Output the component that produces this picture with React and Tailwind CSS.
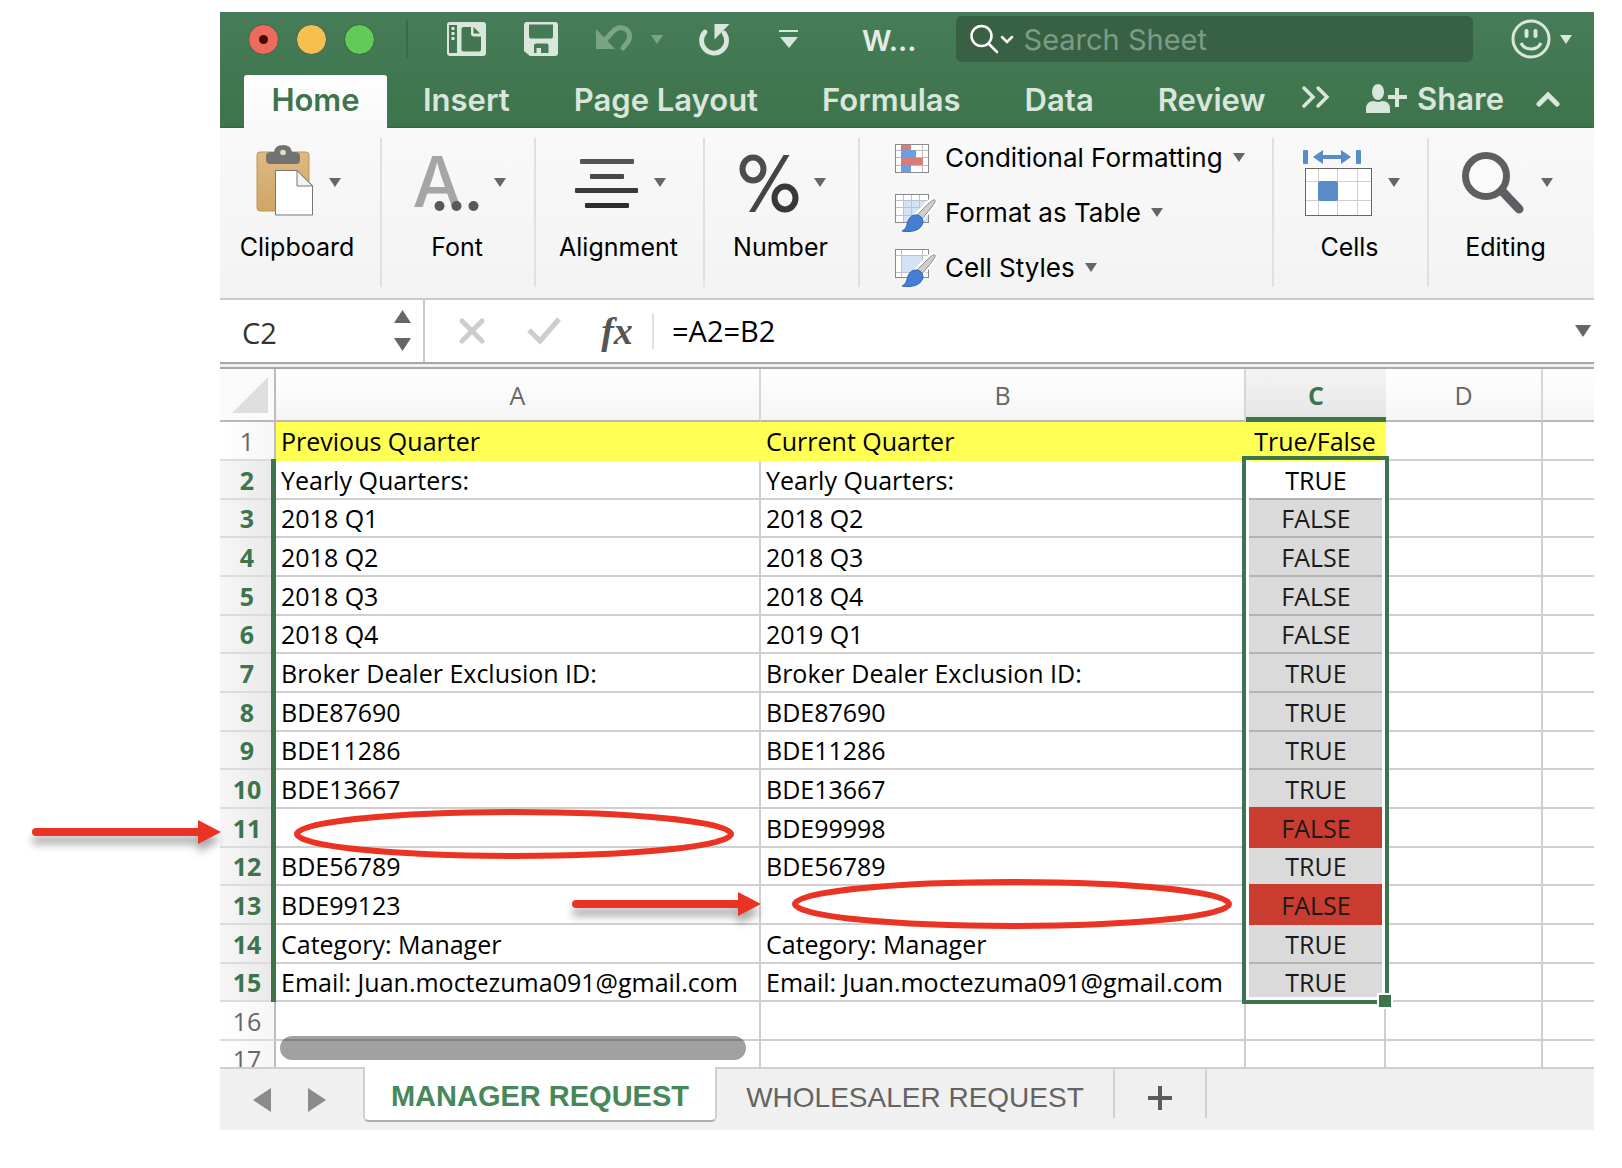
import React from "react";

const TRI = "shrink-0 fill-current";

function Down({ className = "w-3 h-[9px]" }) {
  return (
    <svg viewBox="0 0 12 9" className={`${TRI} ${className}`} aria-hidden="true">
      <path d="M0 0h12L6 9z" />
    </svg>
  );
}

function TemplateIcon() {
  return (
    <svg viewBox="0 0 39 34" className="w-[39px] h-[34px]" aria-hidden="true">
      <rect x="0" y="0" width="39" height="34" rx="3" fill="#d9e6dc" />
      <path d="M2 3h8v28H2z" fill="#42774f" />
      <path d="M16.500 5H24v6.500q0 3 3 3h7V27.500q0 2-2 2H16.500q-2 0-2-2V7q0-2 2-2z" fill="#42774f" />
      <path d="M26.500 5v6.500h6.500z" fill="#42774f" />
      <path d="M4.500 5h3v3h-3zM4.500 10h3v3h-3zM4.500 15h3v3h-3z" fill="#d9e6dc" />
    </svg>
  );
}

function SaveIcon() {
  return (
    <svg viewBox="0 0 34 34" className="w-[34px] h-[34px]" aria-hidden="true">
      <path fillRule="evenodd" fill="#d9e6dc" d="M3 0h28q3 0 3 3v28q0 3-3 3H6l-6-5V3q0-3 3-3zM5 2.500v12q0 2 2 2h20q2 0 2-2v-12zM10 23.500v7.500h2.500v-5H17v5h7.500v-7.500q0-2-2-2H12q-2 0-2 2z" />
    </svg>
  );
}

function UndoIcon() {
  return (
    <svg viewBox="0 0 38 28" className="w-[38px] h-7" aria-hidden="true">
      <path d="M1 4v20h19z" fill="#7ba386" />
      <path d="M10 15L17 7.500C24-1 35 3 34.500 12c0 5-4 7-6.500 11" fill="none" stroke="#7ba386" strokeWidth="5" strokeLinecap="round" />
    </svg>
  );
}

function RedoIcon() {
  return (
    <svg viewBox="0 0 32 33" className="w-8 h-[33px]" aria-hidden="true">
      <path d="M6 9A12.500 12.500 0 1 0 25 10" fill="none" stroke="#d9e6dc" strokeWidth="4.800" strokeLinecap="round" />
      <path d="M15.500 1h15L15.500 16.500z" fill="#d9e6dc" />
    </svg>
  );
}

function ClipboardIcon() {
  return (
    <svg viewBox="0 0 58 72" className="w-[58px] h-[72px]" aria-hidden="true">
      <defs>
        <linearGradient id="board" x1="0" y1="0" x2="0" y2="1">
          <stop offset="0" stopColor="#dfba82" />
          <stop offset="1" stopColor="#d0a566" />
        </linearGradient>
      </defs>
      <rect x="1" y="8" width="52" height="59" rx="3" fill="url(#board)" stroke="#bf9555" />
      <path d="M10 12q0-4 5-4h3q1-7 9-7t9 7h3q5 0 5 4v4q0 4-4 4H14q-4 0-4-4z" fill="#727272" />
      <circle cx="27" cy="8.500" r="2.800" fill="#e9dcc4" />
      <path d="M19.500 26.500H41l15.500 15v29.500h-37z" fill="#fff" stroke="#777" />
      <path d="M41 26.500v15.500h15.500z" fill="#f3f3f3" stroke="#777" />
    </svg>
  );
}

function FontIcon() {
  return (
    <span className="relative block w-[66px] h-[72px] text-left font-medium text-[70px] leading-[75px] text-[#a5a5a5]" aria-hidden="true">
      A
      <svg viewBox="0 0 46 12" className="absolute left-[21px] top-[56px] w-[46px] h-3">
        <circle cx="5.500" cy="6" r="5" fill="#58585c" />
        <circle cx="22.500" cy="6" r="5" fill="#58585c" />
        <circle cx="39.500" cy="6" r="5" fill="#58585c" />
      </svg>
    </span>
  );
}

function AlignIcon() {
  return (
    <svg viewBox="0 0 64 72" className="w-16 h-[72px]" aria-hidden="true">
      <rect x="5" y="15" width="54" height="5" rx="1" fill="#555" />
      <rect x="15" y="30" width="34" height="5" rx="1" fill="#484848" />
      <rect x="0" y="44" width="63" height="5" rx="1" fill="#3a3a3a" />
      <rect x="10" y="59" width="44" height="5" rx="1" fill="#2e2e2e" />
    </svg>
  );
}

function PercentIcon() {
  return (
    <svg viewBox="0 0 60 72" className="w-[60px] h-[72px]" aria-hidden="true">
      <ellipse cx="14" cy="25" rx="10.500" ry="11.500" fill="none" stroke="#4d4d4d" strokeWidth="6" />
      <ellipse cx="46" cy="54" rx="10.500" ry="11.500" fill="none" stroke="#383838" strokeWidth="6" />
      <path d="M44.500 11h6L16 68h-6z" fill="#444" />
    </svg>
  );
}

function Brush() {
  return (
    <g>
      <path d="M40 5c2 2 0 5-3 9L27 26l-7-5L32 9c3-3 6-5 8-4z" fill="#c9c9c9" stroke="#fff" strokeWidth="3" />
      <path d="M40 6c1 1-1 4-4 8l-9 11-5-4L33 10c3-3 6-5 7-4z" fill="#cfcfcf" stroke="#8c8c8c" strokeWidth="1" />
      <path d="M21 21c4 0 7 3 7 7-1 7-9 11-21 9 6-3 4-7 7-12 2-3 4-4 7-4z" fill="#447fd4" stroke="#2f62b4" strokeWidth="1" />
    </g>
  );
}

function CondIcon() {
  return (
    <svg viewBox="0 0 42 38" className="w-[42px] h-[38px]" aria-hidden="true">
      <rect x="0.500" y="5.500" width="33" height="28" fill="#fff" stroke="#8a8a8a" />
      <path d="M6.500 6v27M27.500 6v27M1 11.500h32M1 18.500h32M1 26.500h32" stroke="#bbb" fill="none" />
      <rect x="6" y="6" width="10" height="5" fill="#d97b7b" />
      <rect x="6" y="11" width="15" height="8" fill="#6b9fe4" />
      <rect x="6" y="19" width="22" height="7" fill="#d97b7b" />
      <rect x="6" y="26" width="10" height="7" fill="#6b9fe4" />
    </svg>
  );
}

function TableFormatIcon() {
  return (
    <svg viewBox="0 0 42 38" className="w-[42px] h-[38px]" aria-hidden="true">
      <rect x="0.500" y="0.500" width="33" height="28" fill="#fff" stroke="#8a8a8a" />
      <rect x="9" y="7" width="24" height="21" fill="#d3e2f5" />
      <path d="M8.500 1v27M16.500 1v27M24.500 1v27M1 6.500h32M1 13.500h32M1 21.500h32" stroke="#bcc3cc" fill="none" />
      <Brush />
    </svg>
  );
}

function CellStyleIcon() {
  return (
    <svg viewBox="0 0 42 38" className="w-[42px] h-[38px]" aria-hidden="true">
      <rect x="0.500" y="0.500" width="33" height="28" fill="#fff" stroke="#8a8a8a" />
      <rect x="7" y="7" width="21" height="16" fill="#d3e2f5" />
      <path d="M6.500 1v27M27.500 1v27M1 6.500h32M1 23.500h32" stroke="#bcc3cc" fill="none" />
      <Brush />
    </svg>
  );
}

function CellsIcon() {
  return (
    <svg viewBox="0 0 70 72" className="w-[70px] h-[72px]" aria-hidden="true">
      <rect x="0" y="6" width="5" height="14" rx="1" fill="#588bca" />
      <rect x="53" y="6" width="5" height="14" rx="1" fill="#588bca" />
      <path d="M10 13l10-7v5h18V6l10 7-10 7v-5H20v5z" fill="#588bca" />
      <rect x="2.500" y="24.500" width="66" height="47" fill="#fff" stroke="#666" />
      <path d="M15.500 25v46M34.500 25v46M54.500 25v46M3 37.500h65M3 56.500h65" stroke="#cfcfcf" fill="none" />
      <rect x="15" y="37" width="20" height="20" rx="2" fill="#588bca" />
    </svg>
  );
}

function MagnifyIcon() {
  return (
    <svg viewBox="0 0 64 72" className="w-16 h-[72px]" aria-hidden="true">
      <path d="M40 47l17 18" stroke="#5f5f63" strokeWidth="9" strokeLinecap="round" />
      <circle cx="24" cy="32" r="20.500" fill="#fbfbfb" stroke="#5f5f63" strokeWidth="7" />
    </svg>
  );
}

function Group({ label, icon, className }) {
  return (
    <div className={`relative shrink-0 flex flex-col items-center pt-4 after:content-[''] after:absolute after:right-0 after:top-[10px] after:h-[149px] after:w-[2px] after:bg-[#e0e0e0] last:after:hidden ${className}`}>
      <button type="button" className="flex flex-col items-center gap-[15px]">
        <span className="flex items-center gap-[15px] pl-1 text-[#666]">
          {icon}
          <Down className="w-3 h-[9px] mt-1" />
        </span>
        <span className="text-[25px] leading-8 text-black">{label}</span>
      </button>
    </div>
  );
}

function StyleButton({ icon, label }) {
  return (
    <button type="button" className="flex items-center h-[55px] text-[#666]">
      {icon}
      <span className="ml-2 mr-[10px] text-[26px] leading-8 text-black">{label}</span>
      <Down />
    </button>
  );
}

const ROWS = [
  ["Previous Quarter", "Current Quarter", "True/False"],
  ["Yearly Quarters:", "Yearly Quarters:", "TRUE"],
  ["2018 Q1", "2018 Q2", "FALSE"],
  ["2018 Q2", "2018 Q3", "FALSE"],
  ["2018 Q3", "2018 Q4", "FALSE"],
  ["2018 Q4", "2019 Q1", "FALSE"],
  ["Broker Dealer Exclusion ID:", "Broker Dealer Exclusion ID:", "TRUE"],
  ["BDE87690", "BDE87690", "TRUE"],
  ["BDE11286", "BDE11286", "TRUE"],
  ["BDE13667", "BDE13667", "TRUE"],
  ["", "BDE99998", "FALSE"],
  ["BDE56789", "BDE56789", "TRUE"],
  ["BDE99123", "", "FALSE"],
  ["Category: Manager", "Category: Manager", "TRUE"],
  ["Email: Juan.moctezuma091@gmail.com", "Email: Juan.moctezuma091@gmail.com", "TRUE"],
  ["", "", ""],
];

const GRID = "border-r-2 border-b-2 border-[#cfcfcf]";
const isRed = (n) => n === 11 || n === 13;

function resultClass(n) {
  if (n === 1) return "bg-[#ffff54] border-r-2 border-b-2 border-[#ffff54]";
  if (n === 16) return GRID;
  if (n === 2) return "relative border-b-2 border-b-[#b3b3b3]";
  if (isRed(n)) return "border-b-2 bg-[#ca3c30] border-b-[#ca3c30] text-[#1a1a1a]";
  if (isRed(n + 1)) return "border-b-2 bg-[#dadada] border-b-[#ca3c30] text-[#1a1a1a]";
  return "border-b-2 bg-[#dadada] border-b-[#b3b3b3] text-[#1a1a1a]";
}

function Row({ n, cells }) {
  const picked = n > 1 && n < 16;
  const text = `pl-[5px] text-left whitespace-nowrap ${n === 1 ? "bg-[#ffff54] border-r-2 border-b-2 border-[#ffff54]" : GRID}`;
  return (
    <tr className="h-[39px] [&:nth-child(3n)]:h-[38px]">
      <th
        scope="row"
        className={
          picked
            ? "relative border-b-2 border-b-[#dcdcdc] bg-linear-to-r from-[#f7f7f7] to-[#e8e8e8] pr-[2px] font-bold text-[#3d744c] after:content-[''] after:absolute after:right-0 after:-top-[2px] after:-bottom-[2px] after:w-[5px] after:bg-[#3d744c]"
            : "border-r-2 border-b-2 border-r-[#bdbdbd] border-b-[#dcdcdc] bg-linear-to-r from-white to-[#f6f6f6] font-normal text-[#666]"
        }
      >
        {n}
      </th>
      <td className={text}>{cells[0]}</td>
      <td className={text}>{cells[1]}</td>
      <td className={`text-center ${resultClass(n)}`}>
        {cells[2]}
        {n === 2 && (
          <span className="absolute z-10 -left-1 -top-[5px] w-[147px] h-[548px] border-4 border-[#3d744c] pointer-events-none">
            <span className="absolute inset-0 border-x-[3px] border-b-[3px] border-white" />
            <span className="absolute -right-[8px] -bottom-[9px] w-4 h-4 border-2 border-white bg-[#3d744c]" />
          </span>
        )}
      </td>
      <td className={GRID} />
      <td className="border-b-2 border-[#cfcfcf]" />
    </tr>
  );
}

function ColHead({ children, last }) {
  return (
    <th scope="col" className={`border-b-2 border-b-[#b8b8b8] bg-linear-to-b from-white to-[#f5f5f5] font-normal text-[#666] ${last ? "" : "border-r-2 border-r-[#d6d6d6]"}`}>
      {children}
    </th>
  );
}

function Arrow({ className }) {
  return (
    <svg viewBox="0 0 192 50" className={`absolute w-[192px] h-[50px] overflow-visible drop-shadow-[0_8px_4px_rgba(0,0,0,0.35)] pointer-events-none ${className}`} aria-hidden="true">
      <path d="M4 13h164" stroke="#ea3323" strokeWidth="8" strokeLinecap="round" />
      <path d="M166 1l23 12-23 12z" fill="#ea3323" />
    </svg>
  );
}

function Ring({ className }) {
  return (
    <svg viewBox="0 0 440 50" className={`absolute w-[440px] h-[50px] pointer-events-none ${className}`} aria-hidden="true">
      <ellipse cx="220" cy="25" rx="217" ry="22" fill="none" stroke="#ea3323" strokeWidth="6" />
    </svg>
  );
}

const TABS = [
  ["Insert", "ml-9"],
  ["Page Layout", "ml-16"],
  ["Formulas", "ml-16"],
  ["Data", "ml-16"],
  ["Review", "ml-16"],
];

export default function App() {
  return (
    <div className="relative bg-white pt-3 pl-[220px] pr-7 pb-9 font-['Inter',sans-serif] text-black">
      <main className="flex flex-col overflow-hidden">
        <header className="bg-linear-to-b from-[#467c57] to-[#3d744b] text-[#d9e6dc]">
          <div className="flex items-center h-[63px] pb-[9px]">
            <div className="flex gap-[17px] ml-7">
              <button type="button" aria-label="Close" className="w-[31px] h-[31px] rounded-full bg-[#ed6a5f] border border-[#45604a] flex items-center justify-center">
                <span className="w-[9px] h-[9px] rounded-full bg-[#460804]" />
              </button>
              <button type="button" aria-label="Minimize" className="w-[31px] h-[31px] rounded-full bg-[#f5c04f] border border-[#45604a]" />
              <button type="button" aria-label="Zoom" className="w-[31px] h-[31px] rounded-full bg-[#62ca56] border border-[#37653a]" />
            </div>
            <span className="ml-[31px] w-[2px] h-[38px] bg-[#3a6b48]" />
            <button type="button" aria-label="New from template" className="ml-[39px]"><TemplateIcon /></button>
            <button type="button" aria-label="Save" className="ml-[38px]"><SaveIcon /></button>
            <button type="button" aria-label="Undo" className="ml-[37px]"><UndoIcon /></button>
            <button type="button" aria-label="Undo history" className="ml-[18px] text-[#7ba386]"><Down /></button>
            <button type="button" aria-label="Redo" className="ml-[36px]"><RedoIcon /></button>
            <button type="button" aria-label="Customize toolbar" className="ml-[48px]">
              <svg viewBox="0 0 20 18" className="w-5 h-[18px] fill-current"><path d="M0 0h19v2H0zM1 7h18l-9 11z" /></svg>
            </button>
            <span className="ml-[63px] pt-1 text-[29px] leading-8 font-semibold text-[#e3ede5]">W...</span>
            <label className="ml-[39px] flex-1 min-w-0 flex items-center h-[46px] rounded-md bg-[#386144] pl-[14px]">
              <svg viewBox="0 0 44 30" className="shrink-0 w-11 h-[30px]" fill="none" stroke="#fff" strokeWidth="2.500" strokeLinecap="round" aria-hidden="true">
                <circle cx="11.500" cy="12" r="10" />
                <path d="M19 20l8 8M32 13l5 5 5-5" />
              </svg>
              <input type="text" aria-label="Search Sheet" placeholder="Search Sheet" className="ml-[10px] pt-[2px] flex-1 min-w-0 bg-transparent text-[29px] leading-9 outline-none placeholder:text-[#7d9c86]" />
            </label>
            <button type="button" aria-label="Feedback" className="ml-[38px] mr-[22px] flex items-center gap-[9px]">
              <svg viewBox="0 0 40 40" className="w-10 h-10" fill="none" stroke="#d9e6dc" strokeWidth="3">
                <circle cx="20" cy="20" r="18" />
                <path d="M10 24q3 6 10 6t10-6" />
                <path d="M15.500 12v5M24.500 12v5" strokeWidth="4" strokeLinecap="round" />
              </svg>
              <Down />
            </button>
          </div>
          <nav className="flex h-[53px] border-b border-[#356642] text-[31px] leading-[50px] font-semibold">
            <button type="button" className="ml-6 -mb-px w-[143px] rounded-t-[3px] bg-linear-to-b from-white to-[#f8f8f8] text-[#3d744c] pb-1">Home</button>
            {TABS.map(([t, m]) => (
              <button type="button" key={t} className={`whitespace-nowrap pb-1 ${m}`}>{t}</button>
            ))}
            <button type="button" aria-label="More tabs" className="ml-[36px] pb-2">
              <svg viewBox="0 0 30 24" className="w-[30px] h-6" fill="none" stroke="currentColor" strokeWidth="3.500" strokeLinecap="round"><path d="M3 3l9 9-9 9M17 3l9 9-9 9" /></svg>
            </button>
            <button type="button" className="ml-auto flex items-center gap-[9px] pb-1">
              <svg viewBox="0 0 42 30" className="w-[42px] h-[30px] fill-current" aria-hidden="true">
                <ellipse cx="12" cy="8" rx="6" ry="8" />
                <path d="M0 29V25q0-8 8-8 4 2 8 0 8 0 8 8v4zM29 4h4v7h8v4h-8v8h-4v-8h-7v-4h7z" />
              </svg>
              Share
            </button>
            <button type="button" aria-label="Collapse ribbon" className="ml-[31px] mr-[33px] pb-1">
              <svg viewBox="0 0 26 16" className="w-[26px] h-4" fill="none" stroke="currentColor" strokeWidth="5" strokeLinecap="round"><path d="M4 13l9-9 9 9" /></svg>
            </button>
          </nav>
        </header>

        <section className="flex h-[170px] bg-linear-to-b from-[#f9f9f9] to-[#f3f3f3]">
          <Group label="Clipboard" icon={<ClipboardIcon />} className="w-[162px] pr-2" />
          <Group label="Font" icon={<FontIcon />} className="w-[154px] pr-1" />
          <Group label="Alignment" icon={<AlignIcon />} className="w-[169px] pr-1" />
          <Group label="Number" icon={<PercentIcon />} className="w-[155px] pr-1" />
          <div className="relative flex-1 flex flex-col items-start pt-[2px] pl-[35px] after:content-[''] after:absolute after:right-0 after:top-[10px] after:h-[149px] after:w-[2px] after:bg-[#e0e0e0]">
            <StyleButton icon={<CondIcon />} label="Conditional Formatting" />
            <StyleButton icon={<TableFormatIcon />} label="Format as Table" />
            <StyleButton icon={<CellStyleIcon />} label="Cell Styles" />
          </div>
          <Group label="Cells" icon={<CellsIcon />} className="w-[155px] pr-1" />
          <Group label="Editing" icon={<MagnifyIcon />} className="w-[165px] pr-3" />
        </section>

        <section className="flex items-center h-16 border-t-2 border-[#cacaca] font-['Open_Sans',sans-serif] text-[29px] leading-9">
          <div className="flex items-center self-stretch w-[205px] border-r-2 border-[#cacaca] pl-[22px] pr-3">
            <input type="text" aria-label="Name box" defaultValue="C2" className="flex-1 min-w-0 pt-1 text-[#333] outline-none" />
            <svg viewBox="0 0 17 42" className="w-[17px] h-[42px] fill-[#666]" aria-hidden="true"><path d="M0 13L8.500 0 17 13zM0 28h17L8.500 41z" /></svg>
          </div>
          <button type="button" aria-label="Cancel" className="ml-[33px]">
            <svg viewBox="0 0 28 28" className="w-7 h-7" stroke="#cdcdcd" strokeWidth="5" strokeLinecap="round"><path d="M4 4l20 20M24 4L4 24" /></svg>
          </button>
          <button type="button" aria-label="Enter" className="ml-10">
            <svg viewBox="0 0 36 28" className="w-9 h-7" fill="none" stroke="#cdcdcd" strokeWidth="5"><path d="M3 13l11 11L33 2" /></svg>
          </button>
          <button type="button" aria-label="Insert function" className="ml-9 w-[38px] font-['Liberation_Serif',serif] italic font-bold text-[38px] leading-10 text-[#555]">fx</button>
          <span className="ml-4 w-[2px] h-9 bg-[#e0e0e0]" />
          <input type="text" aria-label="Formula" defaultValue="=A2=B2" className="ml-[18px] flex-1 min-w-0 outline-none" />
          <button type="button" aria-label="Expand formula bar" className="mr-[3px] text-[#666]"><Down className="w-4 h-[14px]" /></button>
        </section>
        <div className="h-[7px] border-y-2 border-[#a8a8a8] bg-[#f0f0f0]" />

        <section className="relative overflow-hidden">
          <table className="w-full table-fixed border-separate border-spacing-0 font-['Open_Sans',sans-serif] text-[25px] leading-8">
            <colgroup>
              <col className="w-14" />
              <col className="w-[485px]" />
              <col className="w-[485px]" />
              <col className="w-[140px]" />
              <col className="w-[157px]" />
              <col />
            </colgroup>
            <thead>
              <tr className="h-[53px]">
                <th className="border-r-2 border-r-[#bdbdbd] border-b-2 border-b-[#b8b8b8] bg-[#fafafa]">
                  <svg viewBox="0 0 36 36" className="ml-3 w-9 h-9 fill-[#dedede]" aria-label="Select all"><path d="M36 0v36H0z" /></svg>
                </th>
                <ColHead>A</ColHead>
                <ColHead>B</ColHead>
                <th scope="col" className="border-b-[5px] border-[#3d744c] bg-linear-to-b from-[#f4f4f4] to-[#e6e6e6] pt-1 font-bold text-[#3d744c]">C</th>
                <ColHead>D</ColHead>
                <ColHead last />
              </tr>
            </thead>
            <tbody>
              {ROWS.map((cells, i) => (
                <Row key={i} n={i + 1} cells={cells} />
              ))}
              <tr>
                <th scope="row" className="border-r-2 border-[#bdbdbd] bg-linear-to-r from-white to-[#f6f6f6] font-normal text-[#666]">
                  <div className="h-[26px] overflow-hidden pt-[2px]">17</div>
                </th>
                <td className="border-r-2 border-[#cfcfcf]" />
                <td className="border-r-2 border-[#cfcfcf]" />
                <td className="border-r-2 border-[#cfcfcf]" />
                <td className="border-r-2 border-[#cfcfcf]" />
                <td />
              </tr>
            </tbody>
          </table>
          <div className="absolute left-[60px] bottom-[7px] w-[466px] h-6 rounded-full bg-black/37" />
        </section>

        <footer className="flex h-[63px] bg-[#f0f0f0] font-['Liberation_Sans',sans-serif] text-[28px]">
          <div className="flex items-center gap-[37px] w-[143px] border-t-2 border-[#cfcfcf] pl-[33px] text-[#8b8b8b]">
            <button type="button" aria-label="Previous sheet"><svg viewBox="0 0 18 26" className="w-[18px] h-[26px] fill-current"><path d="M18 1v24L0 13z" /></svg></button>
            <button type="button" aria-label="Next sheet"><svg viewBox="0 0 18 26" className="w-[18px] h-[26px] fill-current"><path d="M0 1v24l18-12z" /></svg></button>
          </div>
          <button type="button" className="h-[55px] w-[354px] whitespace-nowrap rounded-b-md border-x-2 border-b-2 border-x-[#cfcfcf] border-b-[#b0b0b0] bg-white font-bold text-[29px] text-[#468858] pt-[7px]">MANAGER REQUEST</button>
          <div className="flex-1 flex border-t-2 border-[#cfcfcf] text-[#636363]">
            <button type="button" className="h-[49px] w-[398px] border-r-2 border-[#cfcfcf] pt-2">WHOLESALER REQUEST</button>
            <button type="button" aria-label="Add sheet" className="flex items-center justify-center h-[49px] w-[92px] border-r-2 border-[#cfcfcf] pt-2">
              <svg viewBox="0 0 24 24" className="w-6 h-6 fill-[#5c5c5c]"><path d="M10 0h4v10h10v4H14v10h-4V14H0v-4h10z" /></svg>
            </button>
          </div>
        </footer>
      </main>

      <Ring className="left-[294px] top-[809px]" />
      <Ring className="left-[792px] top-[879px]" />
      <Arrow className="left-8 top-[819px]" />
      <Arrow className="left-[572px] top-[891px]" />
    </div>
  );
}
